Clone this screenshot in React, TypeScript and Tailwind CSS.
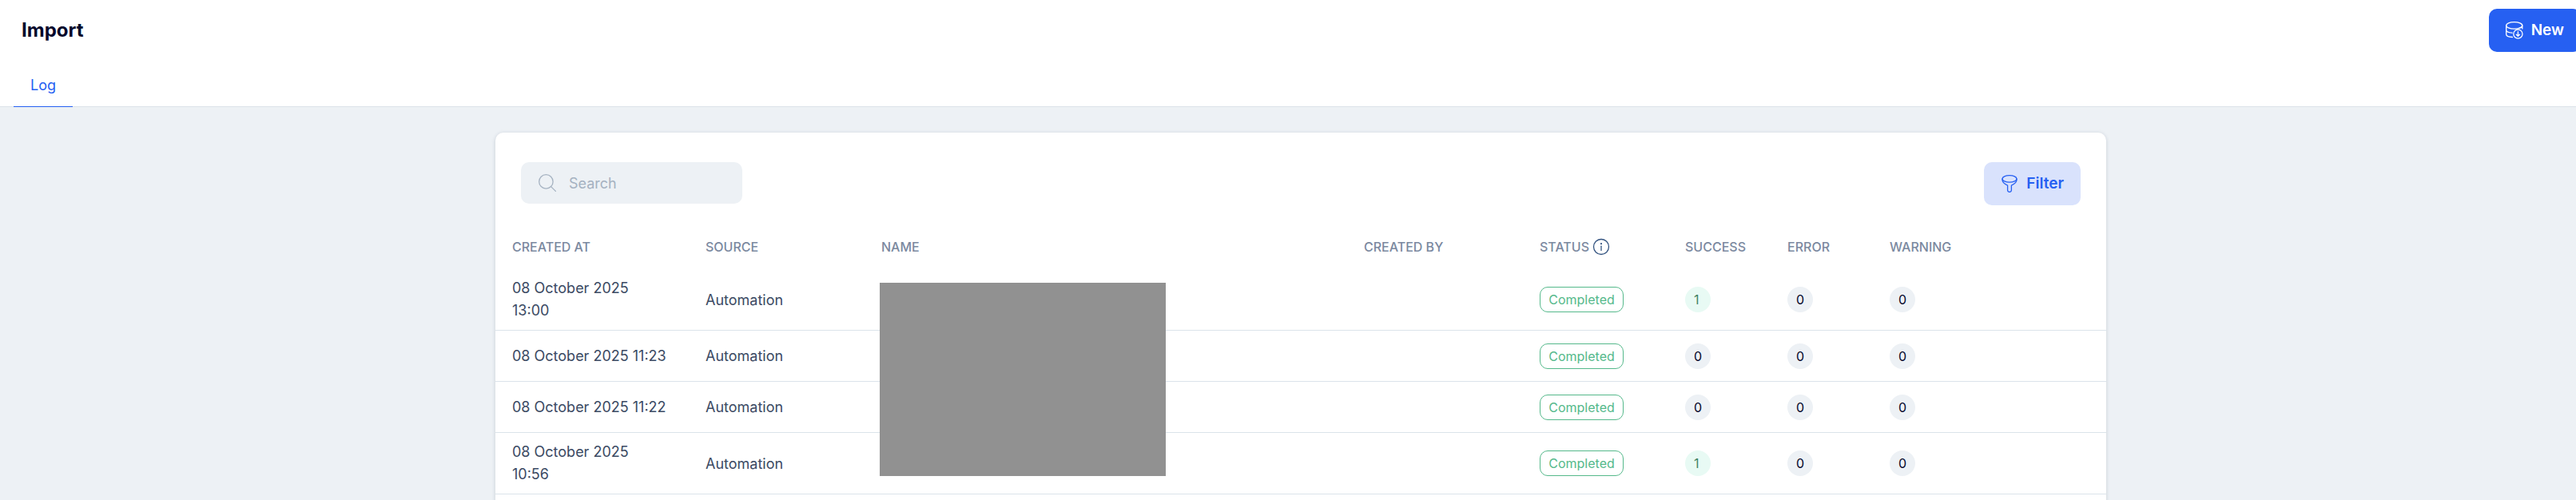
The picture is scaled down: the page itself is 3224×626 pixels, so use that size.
import type { SVGProps } from 'react';

type ImportLog = {
  id: number;
  createdAt: string;
  time: string;
  wrap?: boolean;
  source: string;
  status: string;
  success: number;
  error: number;
  warning: number;
};

const logs: ImportLog[] = [
  { id: 1, createdAt: '08 October 2025', time: '13:00', wrap: true, source: 'Automation', status: 'Completed', success: 1, error: 0, warning: 0 },
  { id: 2, createdAt: '08 October 2025', time: '11:23', source: 'Automation', status: 'Completed', success: 0, error: 0, warning: 0 },
  { id: 3, createdAt: '08 October 2025', time: '11:22', source: 'Automation', status: 'Completed', success: 0, error: 0, warning: 0 },
  { id: 4, createdAt: '08 October 2025', time: '10:56', wrap: true, source: 'Automation', status: 'Completed', success: 1, error: 0, warning: 0 },
];

function Icon({ children, ...props }: SVGProps<SVGSVGElement>) {
  return (
    <svg
      viewBox="0 0 22 22"
      fill="none"
      stroke="currentColor"
      strokeWidth="1.3"
      strokeLinecap="round"
      strokeLinejoin="round"
      aria-hidden="true"
      {...props}
    >
      {children}
    </svg>
  );
}

function DatabaseImportIcon() {
  return (
    <Icon className="size-[22px] shrink-0">
      <ellipse cx="10.7" cy="4.9" rx="10.1" ry="4.2" />
      <path d="M.7 4.9v11c0 1.9 3.2 3.3 7.7 3.6M.7 10.4c0 1.9 3 3.4 7.4 3.7M20.8 4.9v4M20.8 5.6c0 .9-1.2 1.9-3 2.6" />
      <circle cx="15.4" cy="15.6" r="5.6" />
      <path d="M15.4 12.7v5.4M13.3 16.2l2.1 2.1 2.1-2.1" />
    </Icon>
  );
}

function FilterIcon() {
  return (
    <Icon className="size-[22px] shrink-0">
      <ellipse cx="11" cy="4.9" rx="9" ry="4.2" />
      <path d="M2 4.9v1.2c0 3.4 3.2 5.6 6.6 7.1v6.1a2.4 2.1 0 0 0 4.8 0v-6.1c3.4-1.5 6.6-3.7 6.6-7.1V4.9" />
    </Icon>
  );
}

function SearchIcon() {
  return (
    <Icon className="size-[22px] shrink-0 text-[#a5b2c1]">
      <circle cx="9.4" cy="9.4" r="8.7" />
      <path d="M15.6 15.6l5.8 5.8" />
    </Icon>
  );
}

function InfoIcon() {
  return (
    <Icon className="size-[22px] shrink-0 text-[#345480]">
      <circle cx="11" cy="11" r="9.5" />
      <path d="M11 10.2v5.4" />
      <circle cx="11" cy="7.2" r="1.1" fill="currentColor" stroke="none" />
    </Icon>
  );
}

function StatusBadge({ label }: { label: string }) {
  return (
    <span className="flex h-8 w-[105px] items-center justify-center rounded-[10px] border border-[#55b98b] text-[16px] text-[#55b98b]">
      {label}
    </span>
  );
}

function CountBadge({ value, positive = false }: { value: number; positive?: boolean }) {
  return (
    <span
      className={
        positive && value > 0
          ? 'flex size-8 items-center rounded-full bg-[#e8faf4] pl-[11px] text-[16px] text-[#3f8264]'
          : 'flex size-8 items-center rounded-full bg-[#edf1f5] pl-[11px] text-[16px] text-[#05072b]'
      }
    >
      {value}
    </span>
  );
}

export default function App() {
  return (
    <div className="flex h-screen flex-col overflow-hidden bg-[#edf1f5] font-[Inter,Arial,sans-serif] text-[18px] text-[#3b4a63]">
      <header className="border-b border-[#dde3e9] bg-white">
        <div className="flex items-center justify-between pt-[11px] pl-[27px]">
          <h1 className="text-[24px] font-bold text-[#05072b]">Import</h1>
          <button type="button" className="-mr-1.5 flex h-[54px] items-center gap-2.5 rounded-[10px] bg-[#2660f2] px-[21px] text-[19px] font-semibold text-white">
            <DatabaseImportIcon />
            New
          </button>
        </div>
        <nav className="mt-[15px] flex px-[17px]">
          <a href="#log" className="-mb-px flex h-[54px] items-center border-b border-[#2660f2] px-[21px] text-[#2660f2]">
            Log
          </a>
        </nav>
      </header>

      <main className="min-h-0 flex-1 pt-8 pl-8">
        <section className="mx-auto max-w-[2016px] rounded-[10px] bg-white pb-8 shadow-[0_1px_5px_rgba(30,50,80,0.18)]">
          <div className="flex items-start justify-between px-8 pt-[37px] pb-6">
            <label className="flex h-[52px] w-[277px] items-center gap-4 rounded-[10px] bg-[#edf1f5] px-[22px]">
              <SearchIcon />
              <input
                type="search"
                aria-label="Search"
                placeholder="Search"
                className="w-full min-w-0 bg-transparent outline-none placeholder:text-[#a5b2c1]"
              />
            </label>
            <button type="button" className="flex h-[54px] items-center gap-2.5 rounded-[10px] bg-[#d9e2fc] px-[21px] text-[19px] font-semibold text-[#2660f2]">
              <FilterIcon />
              Filter
            </button>
          </div>

          <table className="w-full table-fixed border-separate border-spacing-0 text-left">
            <thead>
              <tr className="h-14 text-[16px] text-[#7b899f] uppercase">
                <th className="w-[242px] pl-[21px] font-medium">Created at</th>
                <th className="w-[220px] pl-[21px] font-medium">Source</th>
                <th className="pl-[21px] font-medium">Name</th>
                <th className="w-[220px] pl-[21px] font-medium">Created by</th>
                <th className="w-[182px] pl-[21px] font-medium">
                  <span className="flex items-center gap-1">
                    Status
                    <InfoIcon />
                  </span>
                </th>
                <th className="w-[128px] pl-[21px] font-medium">Success</th>
                <th className="w-[128px] pl-[21px] font-medium">Error</th>
                <th className="w-[292px] pl-[21px] font-medium">Warning</th>
              </tr>
            </thead>
            <tbody>
              {logs.map((log, index) => (
                <tr key={log.id} className="h-16 *:border-b *:border-[#dbe3ea] *:pl-[21px]">
                  <td className="py-2.5 leading-7">
                    {log.createdAt} {log.wrap && <br />}
                    {log.time}
                  </td>
                  <td>{log.source}</td>
                  <td className="relative">
                    {/* one cover hides the names of all rows */}
                    {index === 0 && <div className="absolute top-[17px] left-[19px] z-10 h-[242px] w-[358px] bg-[#919191]" />}
                  </td>
                  <td />
                  <td>
                    <StatusBadge label={log.status} />
                  </td>
                  <td>
                    <CountBadge value={log.success} positive />
                  </td>
                  <td>
                    <CountBadge value={log.error} />
                  </td>
                  <td>
                    <CountBadge value={log.warning} />
                  </td>
                </tr>
              ))}
            </tbody>
          </table>
        </section>
      </main>
    </div>
  );
}
